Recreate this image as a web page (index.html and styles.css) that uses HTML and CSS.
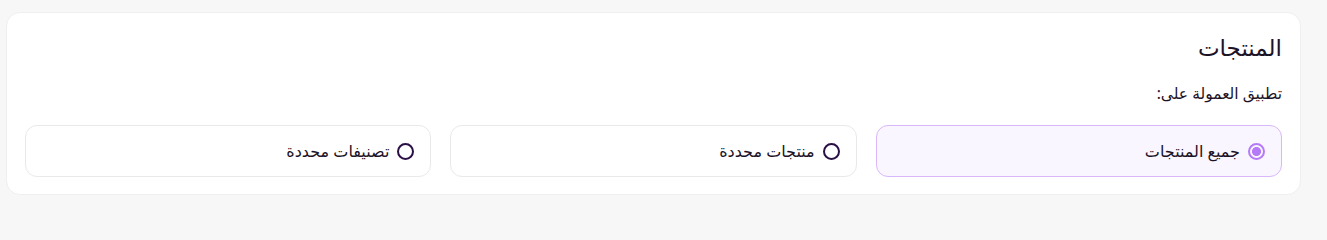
FILE: index.html
```html
<!DOCTYPE html>
<html lang="ar" dir="rtl">
<head>
<meta charset="utf-8">
<link rel="stylesheet" href="styles.css">
</head>
<body>
<section class="card">
  <h2 class="title">المنتجات</h2>
  <p class="label">تطبيق العمولة على:</p>
  <div class="options">
    <label class="option selected">
      <span class="radio"></span>
      <span class="text">جميع المنتجات</span>
    </label>
    <label class="option">
      <span class="radio"></span>
      <span class="text">منتجات محددة</span>
    </label>
    <label class="option">
      <span class="radio"></span>
      <span class="text">تصنيفات محددة</span>
    </label>
  </div>
</section>
</body>
</html>
```
FILE: styles.css
```css
* { box-sizing: border-box; }
html, body { margin: 0; }
body {
  background: #f7f7f7;
  padding: 12px 26px 0 6px;
  font-family: "Noto Sans", "DejaVu Sans", sans-serif;
  color: #1c1326;
}
.card {
  background: #fff;
  border: 1px solid #efefef;
  border-radius: 14px;
  padding: 19px 18px 16px 18px;
  height: 183px;
}
.title {
  margin: 0;
  font-size: 23px;
  font-weight: 400;
  line-height: 30px;
}
.label {
  margin: 20px 0 0;
  font-size: 15.5px;
  line-height: 22px;
}
.options {
  margin-top: 21px;
  display: grid;
  grid-template-columns: repeat(3, 1fr);
  gap: 19px;
}
.option {
  display: flex;
  align-items: center;
  gap: 8px;
  height: 52px;
  padding: 0 16px;
  border: 1px solid #e9e9e9;
  border-radius: 12px;
  background: #fff;
  font-size: 16px;
}
.option.selected {
  background: #faf6ff;
  border-color: #d8b8fb;
}
.radio {
  width: 17px;
  height: 17px;
  border-radius: 50%;
  border: 2px solid #2a0f45;
  flex: none;
}
.option.selected .radio {
  border-color: #b57bf7;
  background: radial-gradient(circle, #b57bf7 0 4.2px, transparent 4.8px);
}
```
